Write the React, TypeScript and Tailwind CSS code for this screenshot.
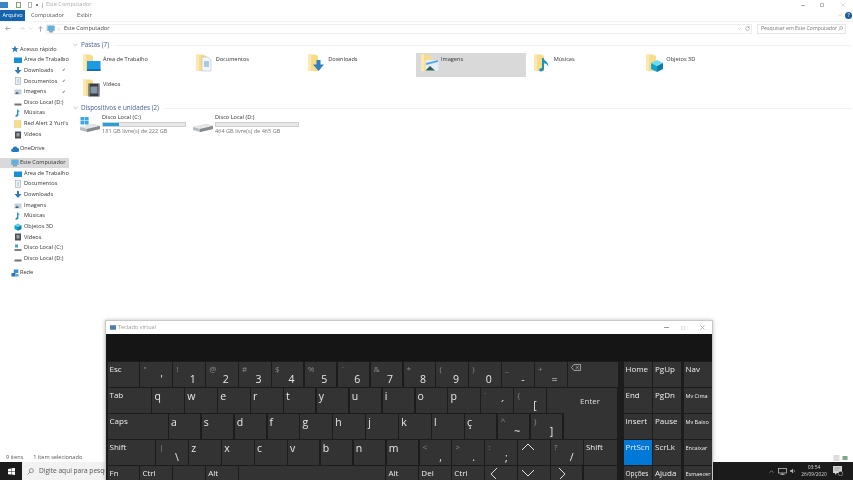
import React from "react";

type Glyph = "desktop" | "docs" | "down" | "img" | "music" | "cube" | "video" | "disk" | "diskc" | "folder" | "cloud" | "pc" | "net" | "star";

function Mini({ g }: { g: Glyph }) {
  return (
    <svg viewBox="0 0 8 8" className="w-[8px] h-[8px] shrink-0">
      {g === "desktop" && <rect x="0" y="1.5" width="8" height="5.5" fill="#1b8fd6" />}
      {g === "docs" && <g><rect x="1.5" y="0.5" width="5" height="7" fill="#eef2f6" stroke="#9aa7b5" strokeWidth="0.6" /><path d="M3 3h2M3 5h2" stroke="#7c93ab" strokeWidth="0.6" /></g>}
      {g === "down" && <path d="M3 0h2v3h2.5L4 7 .5 3H3z" fill="#2f79b8" />}
      {g === "img" && <g><rect x="0.5" y="1.5" width="7" height="5" fill="#c4d0dc" /><path d="M1 6l2-2.5L5 6z" fill="#51657a" /></g>}
      {g === "music" && <path d="M3 .5h1c.3 1.4 2 1.6 2 3.2-.5-.8-1-1-1.6-1.1V6c0 1-1 1.700-2 1.700S1.200 7 1.700 6.200 3 5.500 3 5.500z" fill="#2a8fc9" />}
      {g === "cube" && <g><path d="M4 .5 7.500 2.300 4 4 .5 2.300z" fill="#5fd0e6" /><path d="M.5 2.300 4 4v3.700L.5 6z" fill="#12a1c7" /><path d="M7.500 2.300 4 4v3.700L7.500 6z" fill="#0b7fa5" /></g>}
      {g === "video" && <g><rect x="1" y="0.5" width="6" height="7" fill="#4b4f55" /><rect x="2.500" y="2" width="3" height="3.500" fill="#9aa1a8" /></g>}
      {g === "disk" && <g><rect x="0.500" y="4.500" width="7" height="2" fill="#6f7378" /></g>}
      {g === "diskc" && <g><rect x="1" y="0.500" width="3" height="3" fill="#4f9bd8" /><rect x="0.500" y="5" width="7" height="2" fill="#7d8287" /></g>}
      {g === "folder" && <rect x="0.500" y="0.500" width="6.500" height="7" fill="#f6dc8e" stroke="#e3c56a" strokeWidth="0.4" />}
      {g === "cloud" && <path d="M2 7a1.800 1.800 0 0 1-.2-3.600A2.400 2.400 0 0 1 6.300 3 2 2 0 0 1 6.300 7z" fill="#1f78c1" />}
      {g === "pc" && <g><rect x="0.500" y="0.800" width="7" height="5" fill="#5db2e6" stroke="#8aa" strokeWidth="0.4" /><rect x="2" y="6.200" width="4" height="1.200" fill="#7b8a99" /></g>}
      {g === "net" && <g><rect x="2.800" y="0.500" width="4.500" height="3.500" fill="#3d8fd0" /><rect x="0.500" y="4" width="4" height="3.500" fill="#2a73b3" /><rect x="4.500" y="5" width="3" height="2.500" fill="#5ba6dd" /></g>}
      {g === "star" && <path d="M4 .6 5 3h2.500L5.600 4.600l.8 2.700L4 5.800 1.600 7.300l.8-2.700L.5 3H3z" fill="#2f79b8" />}
    </svg>
  );
}

function Nav({ g, t, pin, sub, active }: { g: Glyph; t: string; pin?: boolean; sub?: boolean; active?: boolean }) {
  return (
    <div className={`relative h-[10.67px] flex items-center text-[5.6px] leading-none text-[#333] whitespace-nowrap ${sub ? "pl-[14px] gap-[2px]" : "pl-[11px] gap-[1px]"} ${active ? "bg-[#d9d9d9]" : ""}`}>
      <Mini g={g} />
      <span>{t}</span>
      {pin && <span className="absolute right-[3px] top-[4px] w-[3px] h-[3px] rotate-45 border-l border-[#888]" />}
    </div>
  );
}

function Big({ kind }: { kind: string }) {
  return (
    <svg viewBox="0 0 20 18" className="w-[20px] h-[18px] shrink-0">
      <path d="M0 .5h7l3 1.500V17H0z" fill="#f8dc8a" />
      <path d="M0 .5h3V17H0z" fill="#fbe8b2" />
      {kind === "desktop" && <g><rect x="4" y="7" width="13.500" height="10" fill="#1d9ae0" /><rect x="4" y="15" width="13.500" height="2" fill="#0f72b4" /></g>}
      {kind === "docs" && <g><path d="M6 3h6l3 3v11H6z" fill="#f3f6f9" stroke="#a8b4c0" strokeWidth="0.5" /><path d="M8 8h5M8 10h5M8 12h5" stroke="#5f9fd0" strokeWidth="1" /></g>}
      {kind === "down" && <path d="M8.500 6h4v4.500H16L10.500 17 5 10.500h3.500z" fill="#2f7fc1" />}
      {kind === "img" && <g><rect x="4.500" y="6" width="13" height="10.500" fill="#e4eef7" /><path d="M5 9l12-3v2L5 11z" fill="#58a9e4" /><path d="M4.500 16.500 9 12l5 4.500z" fill="#2f5f55" /></g>}
      {kind === "music" && <path d="M8 4h1.500c.6 3 5 3.500 5 8.500-1.200-2.300-3-3-4.500-3.200V15c0 1.500-1.500 2.500-3 2.500S4.500 16 5.500 15 8 14 8 14z" fill="#1d93b8" />}
      {kind === "cube" && <g><path d="M11 6l6 3-6 3-6-3z" fill="#6fdcee" /><path d="M5 9l6 3v6l-6-3z" fill="#13a6cf" /><path d="M17 9l-6 3v6l6-3z" fill="#0a7ea6" /></g>}
      {kind === "video" && <g><rect x="5.500" y="4.500" width="11" height="13" fill="#3a3d42" /><rect x="7.500" y="7.500" width="7" height="7" fill="#7f98ad" /><path d="M6.500 5.500v11M15.500 5.500v11" stroke="#cfd3d6" strokeWidth="0.800" strokeDasharray="1 1" /></g>}
    </svg>
  );
}

function Tile({ kind, label, selected }: { kind: string; label: string; selected?: boolean }) {
  return (
    <div className={`h-[24px] w-[110px] flex items-start pl-[5px] pt-[1px] ${selected ? "bg-[#d9d9d9]" : ""}`}>
      <Big kind={kind} />
      <span className="text-[5.6px] leading-none text-[#333] mt-[3px] whitespace-nowrap">{label}</span>
    </div>
  );
}

function Header({ t }: { t: string }) {
  return (
    <div className="flex items-center h-[10px] gap-[3px]">
      <svg viewBox="0 0 6 4" className="w-[5px] h-[4px]"><path d="M.5.500 3 3 5.500.500" fill="none" stroke="#8a94a6" strokeWidth="0.700" /></svg>
      <span className="text-[6.300px] leading-none text-[#4a6299] whitespace-nowrap">{t}</span>
      <span className="flex-1 h-px bg-[#eff1f4] ml-[2px]" />
    </div>
  );
}

function Drive({ label, sub, pct, win }: { label: string; sub: string; pct?: boolean; win?: boolean }) {
  return (
    <div className="w-[113px] flex items-start gap-[2px]">
      <svg viewBox="0 0 20 15" className="w-[20px] h-[15px] mt-[2px] shrink-0">
        {win && <g fill="#3ba7e3"><rect x="0.500" y="0" width="3.800" height="3.500" /><rect x="4.800" y="0" width="3.800" height="3.500" /><rect x="0.500" y="4" width="3.800" height="3.500" /><rect x="4.800" y="4" width="3.800" height="3.500" /></g>}
        <path d="M0 10l13-3 7 2v3L7 15 0 13z" fill="#b8bcc0" />
        <path d="M0 10l13-3 7 2-13 3z" fill="#e4e6e8" />
        <path d="M7 12l13-3v3L7 15z" fill="#85898d" />
      </svg>
      <div className="w-[84px] flex flex-col">
        <span className="text-[5.6px] leading-none text-[#333] whitespace-nowrap">{label}</span>
        <div className="h-[5px] mt-[1px] bg-[#e6e6e6] border border-[#d0d0d0]">
          {pct && <div className="h-full w-[19%] bg-[#26a0da]" />}
        </div>
        <span className="text-[5.600px] leading-none text-[#777] whitespace-nowrap mt-[2.500px]">{sub}</span>
      </div>
    </div>
  );
}

function Key({ top, main, small, cls = "w-[31.5px]", tiny, mid, active, sym }: { top?: string; main?: string; small?: string; cls?: string; tiny?: boolean; mid?: boolean; active?: boolean; sym?: React.ReactNode }) {
  const size = tiny ? "text-[5.500px] top-[6px]" : mid ? "text-[6.500px] top-[5px]" : "text-[8px] top-[3px]";
  return (
    <div className={`relative h-[25px] shrink-0 ${active ? "bg-[#0078d7]" : "bg-[#333333]"} ${cls}`}>
      {small && <span className={`absolute left-[2px] leading-none text-[#eeeeee] whitespace-nowrap ${size}`}>{small}</span>}
      {top && <span className="absolute left-[3px] top-[3px] text-[8px] leading-none text-[#8a8a8a]">{top}</span>}
      {main && <span className="absolute right-[9px] bottom-[3px] text-[10.5px] leading-none text-[#e8e8e8]">{main}</span>}
      {sym}
    </div>
  );
}

function Letter({ t, cls = "w-[31.5px]" }: { t: string; cls?: string }) {
  return (
    <div className={`relative h-[25px] shrink-0 bg-[#333333] ${cls}`}>
      <span className="absolute left-[2px] top-[3px] text-[10.5px] leading-none text-[#e8e8e8]">{t}</span>
    </div>
  );
}

function Chev({ d }: { d: string }) {
  return (
    <svg viewBox="0 0 16 12" className="absolute left-[2px] top-[1px] w-[16px] h-[12px]">
      <path d={d} fill="none" stroke="#e0e0e0" strokeWidth="1" />
    </svg>
  );
}

function Keyboard() {
  const mid = "flex gap-[1.4px]";
  const r = "w-[28px]";
  return (
    <div className="absolute left-[105px] top-[320px] w-[608px] h-[160px] flex flex-col bg-[#1c1c1c] border-t border-x border-[#c9c9c9] shadow-[0_0_4px_rgba(0,0,0,0.25)] overflow-hidden">
      <div className="h-[13px] bg-white flex items-center shrink-0 pl-[4px] pr-[7px]">
        <svg viewBox="0 0 8 6" className="w-[6px] h-[5px] mr-[2px]"><rect width="8" height="6" fill="#4d7fa8" /></svg>
        <span className="text-[5.6px] leading-none text-[#9a9a9a]">Teclado virtual</span>
        <span className="flex-1" />
        <span className="w-[5px] h-px bg-[#999] mr-[12px]" />
        <span className="w-[4px] h-[4px] border border-[#e2e2e2] mr-[15px]" />
        <svg viewBox="0 0 6 6" className="w-[5px] h-[5px]"><path d="M.5.500l5 5M5.500.500l-5 5" stroke="#8a8a8a" strokeWidth="0.700" /></svg>
      </div>
      <div className="h-[27px] bg-[#151515] shrink-0" />
      <div className="flex pl-[1.5px] pt-px gap-[6px]">
        <div className="flex flex-col gap-px w-[510px]">
          <div className={mid}>
            <Key small="Esc" />
            <Key top="&quot;" main="'" />
            <Key top="!" main="1" />
            <Key top="@" main="2" />
            <Key top="#" main="3" />
            <Key top="$" main="4" />
            <Key top="%" main="5" />
            <Key top="¨" main="6" />
            <Key top="&amp;" main="7" />
            <Key top="*" main="8" />
            <Key top="(" main="9" />
            <Key top=")" main="0" />
            <Key top="_" main="-" />
            <Key top="+" main="=" />
            <Key cls="w-[50px]" sym={
              <svg viewBox="0 0 12 8" className="absolute left-[3px] top-[2px] w-[10px] h-[7px]"><path d="M3.500.500H11.500V7.500H3.500L.5 4z" fill="none" stroke="#ddd" strokeWidth="0.800" /><path d="M6 2.500l3 3M9 2.500l-3 3" stroke="#ddd" strokeWidth="0.700" /></svg>
            } />
          </div>
          <div className={mid}>
            <Key small="Tab" cls="w-[43.5px]" />
            {["q", "w", "e", "r", "t", "y", "u", "i", "o", "p"].map((c) => <Letter key={c} t={c} />)}
            <Key top="`" main="´" />
            <Key top="{" main="[" />
            <div className="relative h-[25px] w-[70px] bg-[#333333] shrink-0">
              <span className="absolute left-[33px] top-[9px] text-[8px] leading-none text-[#dddddd]">Enter</span>
            </div>
          </div>
          <div className={mid}>
            <Key small="Caps" cls="w-[60px]" />
            {["a", "s", "d", "f", "g", "h", "j", "k", "l", "ç"].map((c) => <Letter key={c} t={c} />)}
            <Key top="^" main="~" />
            <Key top="}" main="]" />
            <div className="h-[27px] -mt-[2px] w-[53px] bg-[#333333] shrink-0" />
          </div>
          <div className={mid}>
            <Key small="Shift" cls="w-[47.5px]" />
            <Key top="|" main="\" />
            {["z", "x", "c", "v", "b", "n", "m"].map((c) => <Letter key={c} t={c} />)}
            <Key top="<" main="," />
            <Key top=">" main="." />
            <Key top=":" main=";" />
            <Key sym={<Chev d="M2 9l6-6 6 6" />} />
            <Key top="?" main="/" />
            <Key small="Shift" cls="w-[33px]" />
          </div>
          <div className={mid}>
            <Key small="Fn" />
            <Key small="Ctrl" />
            <Key sym={
              <svg viewBox="0 0 8 8" className="absolute left-[12px] bottom-[4px] w-[7px] h-[7px]"><path d="M0 1l3.500-.5V3.700H0zM4 .4 8 0v3.700H4zM0 4.200h3.500v3.300L0 7zM4 4.200h4V8l-4-.5z" fill="#eee" /></svg>
            } />
            <Key small="Alt" />
            <Key cls="w-[146px]" />
            <Key small="Alt" />
            <Key small="Del" />
            <Key small="Ctrl" />
            <Key sym={<Chev d="M10 1 4 7l6 6" />} />
            <Key sym={<Chev d="M2 3l6 6 6-6" />} />
            <Key sym={<Chev d="M6 1l6 6-6 6" />} />
            <Key cls="w-[33px]" sym={<span className="absolute left-[14px] bottom-[4px] w-[5px] h-[6px] bg-[#ccc]" />} />
          </div>
        </div>
        <div className="flex flex-col gap-px">
          {[
            ["Home", "PgUp", "Nav"],
            ["End", "PgDn", "Mv Cima"],
            ["Insert", "Pause", "Mv Baixo"],
            ["PrtScn", "ScrLk", "Encaixar"],
            ["Opções", "Ajuda", "Esmaecer"],
          ].map((row) => (
            <div key={row[0]} className="flex gap-[1.5px]">
              <Key small={row[0]} cls={r} active={row[0] === "PrtScn"} mid={row[0] === "Opções"} />
              <Key small={row[1]} cls={r} />
              <div className="w-[1px]" />
              <Key small={row[2]} cls={`${r} -ml-[1.5px]`} tiny={row[2] !== "Nav"} />
            </div>
          ))}
        </div>
      </div>
    </div>
  );
}

function Explorer() {
  return (
    <div className="flex-1 min-h-0 flex flex-col bg-white">
      <div className="h-[10px] flex items-center shrink-0 pr-[8px]">
        <svg viewBox="0 0 8 6" className="w-[8px] h-[6px] ml-0"><rect width="8" height="6" fill="#3c84c4" /></svg>
        <span className="w-[5px] h-[6px] border border-[#7aa37a] ml-[8px]" />
        <span className="w-[4px] h-[6px] border border-[#b6b6b6] ml-[7px]" />
        <span className="w-[2px] h-[2px] rounded-full bg-[#555] ml-[4px]" />
        <span className="w-px h-[5px] bg-[#bbb] ml-[4px]" />
        <span className="text-[5.6px] leading-none text-[#aaa] ml-[3px]">Este Computador</span>
        <span className="flex-1" />
        <span className="w-[4px] h-px bg-[#aaa]" />
        <span className="w-[4px] h-[4px] border border-[#bbb] ml-[15px]" />
        <svg viewBox="0 0 6 6" className="w-[4px] h-[4px] ml-[17px]"><path d="M.5.500l5 5M5.500.500l-5 5" stroke="#bbb" strokeWidth="0.800" /></svg>
      </div>
      <div className="h-[11px] flex items-center shrink-0 pr-[1px]">
        <span className="w-[25px] h-full bg-[#1464ad] text-white text-[5.6px] leading-[10px] text-center">Arquivo</span>
        <span className="text-[5.6px] leading-none text-[#555] ml-[6px]">Computador</span>
        <span className="text-[5.6px] leading-none text-[#555] ml-[13px]">Exibir</span>
        <span className="flex-1" />
        <svg viewBox="0 0 6 4" className="w-[4px] h-[3px] mr-[3px]"><path d="M.5.500 3 3 5.500.500" fill="none" stroke="#f0b48a" strokeWidth="1" /></svg>
        <span className="w-[7px] h-[7px] rounded-full bg-[#1c5f9e] text-white text-[5px] leading-[7px] text-center">?</span>
      </div>
      <div className="h-[14px] flex items-center shrink-0 pl-[5px] pr-[5px] border-t border-[#f2f2f2]">
        <svg viewBox="0 0 8 6" className="w-[6px] h-[5px]"><path d="M7.500 3H1M3.500.5 1 3l2.500 2.500" fill="none" stroke="#6b7480" strokeWidth="0.800" /></svg>
        <svg viewBox="0 0 8 6" className="w-[6px] h-[5px] ml-[8px]"><path d="M.5 3H7M4.500.5 7 3 4.500 5.500" fill="none" stroke="#d0d0d0" strokeWidth="0.800" /></svg>
        <svg viewBox="0 0 6 4" className="w-[4px] h-[3px] ml-[4px]"><path d="M.5.500 3 3 5.500.500" fill="none" stroke="#c0c0c0" strokeWidth="0.800" /></svg>
        <svg viewBox="0 0 6 8" className="w-[5px] h-[6px] ml-[5px]"><path d="M3 7.500V1M.5 3.500 3 1l2.500 2.500" fill="none" stroke="#6b7480" strokeWidth="0.800" /></svg>
        <div className="ml-[3px] w-[706px] h-[10px] border border-[#eeeeee] flex items-center">
          <Mini g="pc" />
          <svg viewBox="0 0 4 6" className="w-[2px] h-[4px] ml-[3px]"><path d="M.5.500 3 3 .5 5.500" fill="none" stroke="#999" strokeWidth="0.800" /></svg>
          <span className="text-[5.6px] leading-none text-[#444] ml-[4px]">Este Computador</span>
          <span className="flex-1" />
          <svg viewBox="0 0 6 4" className="w-[3px] h-[2px] mr-[4px]"><path d="M.5.500 3 3 5.500.500" fill="none" stroke="#888" strokeWidth="0.800" /></svg>
          <svg viewBox="0 0 8 8" className="w-[5px] h-[5px] mr-[1px]"><path d="M6.500 2.500A3 3 0 1 0 7 4M6.500.5v2h-2" fill="none" stroke="#777" strokeWidth="0.800" /></svg>
        </div>
        <div className="ml-[5px] w-[89px] h-[10px] border border-[#e6e6e6] flex items-center pl-[3px]">
          <span className="text-[5.2px] leading-none text-[#777] whitespace-nowrap">Pesquisar em Este Computador</span>
          <span className="flex-1" />
          <svg viewBox="0 0 8 8" className="w-[5px] h-[5px] mr-[2px]"><circle cx="5" cy="3" r="2.300" fill="none" stroke="#777" strokeWidth="0.800" /><path d="M3.300 4.700.8 7.300" stroke="#777" strokeWidth="0.800" /></svg>
        </div>
      </div>
      <div className="flex-1 min-h-0 flex">
        <div className="w-[69px] shrink-0 flex flex-col pt-[9px] overflow-hidden">
          <Nav g="star" t="Acesso rápido" />
          <Nav sub g="desktop" t="Área de Trabalho" pin />
          <Nav sub g="down" t="Downloads" pin />
          <Nav sub g="docs" t="Documentos" pin />
          <Nav sub g="img" t="Imagens" pin />
          <Nav sub g="disk" t="Disco Local (D:)" />
          <Nav sub g="music" t="Músicas" />
          <Nav sub g="folder" t="Red Alert 2 Yuri's Re" />
          <Nav sub g="video" t="Vídeos" />
          <div className="h-[3.500px] shrink-0" />
          <Nav g="cloud" t="OneDrive" />
          <div className="h-[3.500px] shrink-0" />
          <Nav g="pc" t="Este Computador" active />
          <Nav sub g="desktop" t="Área de Trabalho" />
          <Nav sub g="docs" t="Documentos" />
          <Nav sub g="down" t="Downloads" />
          <Nav sub g="img" t="Imagens" />
          <Nav sub g="music" t="Músicas" />
          <Nav sub g="cube" t="Objetos 3D" />
          <Nav sub g="video" t="Vídeos" />
          <Nav sub g="diskc" t="Disco Local (C:)" />
          <Nav sub g="disk" t="Disco Local (D:)" />
          <div className="h-[3.500px] shrink-0" />
          <Nav g="net" t="Rede" />
        </div>
        <div className="flex-1 min-w-0 pl-[4px] pt-[5px] pr-[2px]">
          <Header t="Pastas (7)" />
          <div className="grid grid-cols-[repeat(7,112.67px)] gap-y-px mt-[3px] pl-[5px]">
            <Tile kind="desktop" label="Área de Trabalho" />
            <Tile kind="docs" label="Documentos" />
            <Tile kind="down" label="Downloads" />
            <Tile kind="img" label="Imagens" selected />
            <Tile kind="music" label="Músicas" />
            <Tile kind="cube" label="Objetos 3D" />
            <div />
            <Tile kind="video" label="Vídeos" />
          </div>
          <div className="mt-[1px]"><Header t="Dispositivos e unidades (2)" /></div>
          <div className="flex pl-[7px] mt-[2px]">
            <Drive win pct label="Disco Local (C:)" sub="181 GB livre(s) de 222 GB" />
            <Drive label="Disco Local (D:)" sub="464 GB livre(s) de 465 GB" />
          </div>
        </div>
      </div>
      <div className="h-[9px] shrink-0 flex items-center pl-[6px] pr-[5px]">
        <span className="text-[5.6px] leading-none text-[#555] whitespace-nowrap">9 itens</span>
        <span className="text-[5.6px] leading-none text-[#555] ml-[10px] whitespace-nowrap">1 item selecionado</span>
        <span className="flex-1" />
        <svg viewBox="0 0 14 6" className="w-[15px] h-[6px]"><path d="M0 1h6M0 3h6M0 5h6" stroke="#aaa" strokeWidth="0.800" /><rect x="9" y="1" width="5" height="4" fill="#7fa68a" /></svg>
      </div>
    </div>
  );
}

function Taskbar() {
  return (
    <div className="h-[18px] shrink-0 bg-[#1b1b1b] flex items-center">
      <div className="w-[22px] flex justify-center">
        <svg viewBox="0 0 8 8" className="w-[7px] h-[7px]"><path d="M0 1l3.500-.5V3.700H0zM4 .4 8 0v3.700H4zM0 4.200h3.500v3.300L0 7zM4 4.200h4V8l-4-.5z" fill="#ffffff" /></svg>
      </div>
      <div className="w-[260px] h-full bg-[#f2f2f2] flex items-center pl-[5px]">
        <svg viewBox="0 0 8 8" className="w-[7px] h-[7px]"><circle cx="5" cy="3" r="2.300" fill="none" stroke="#555" strokeWidth="0.700" /><path d="M3.300 4.700.8 7.300" stroke="#555" strokeWidth="0.800" /></svg>
        <span className="text-[6.6px] leading-none text-[#555] ml-[5px] whitespace-nowrap">Digite aqui para pesquisar</span>
      </div>
      <span className="flex-1" />
      <svg viewBox="0 0 6 4" className="w-[5px] h-[3px]"><path d="M.5 3.500 3 1l2.500 2.500" fill="none" stroke="#ccc" strokeWidth="0.700" /></svg>
      <svg viewBox="0 0 9 7" className="w-[9px] h-[7px] ml-[4px]"><rect x="0.500" y="0.500" width="8" height="4.500" fill="none" stroke="#bbb" strokeWidth="0.800" /><path d="M4.500 5v1.500M2.500 6.500h4" stroke="#bbb" strokeWidth="0.800" /></svg>
      <svg viewBox="0 0 7 7" className="w-[6px] h-[6px] ml-[3px]"><path d="M0 2.500h1.500L3.500 1v5L1.500 4.500H0z" fill="#bbb" /><path d="M4.700 2a2 2 0 0 1 0 3" fill="none" stroke="#bbb" strokeWidth="0.700" /></svg>
      <div className="w-[30px] ml-[3px] flex flex-col items-center text-[#d8d8d8] leading-none">
        <span className="text-[5px]">03:54</span>
        <span className="text-[4.8px] mt-[2px] whitespace-nowrap">26/09/2020</span>
      </div>
      <svg viewBox="0 0 10 10" className="w-[10px] h-[10px] ml-[4px] mr-[10px]">
        <path d="M0 0h9v7H4L2 9V7H0z" fill="#d4d4d4" />
        <path d="M1.500 2h6M1.500 4h4" stroke="#777" strokeWidth="0.600" />
        <circle cx="7.500" cy="7.500" r="2.300" fill="#1b1b1b" stroke="#d4d4d4" strokeWidth="0.500" />
      </svg>
    </div>
  );
}

export default function App() {
  return (
    <div className="relative w-[853px] h-[480px] overflow-hidden flex flex-col bg-white blur-[0.45px] font-['Open_Sans',sans-serif]">
      <Explorer />
      <Taskbar />
      <Keyboard />
    </div>
  );
}
